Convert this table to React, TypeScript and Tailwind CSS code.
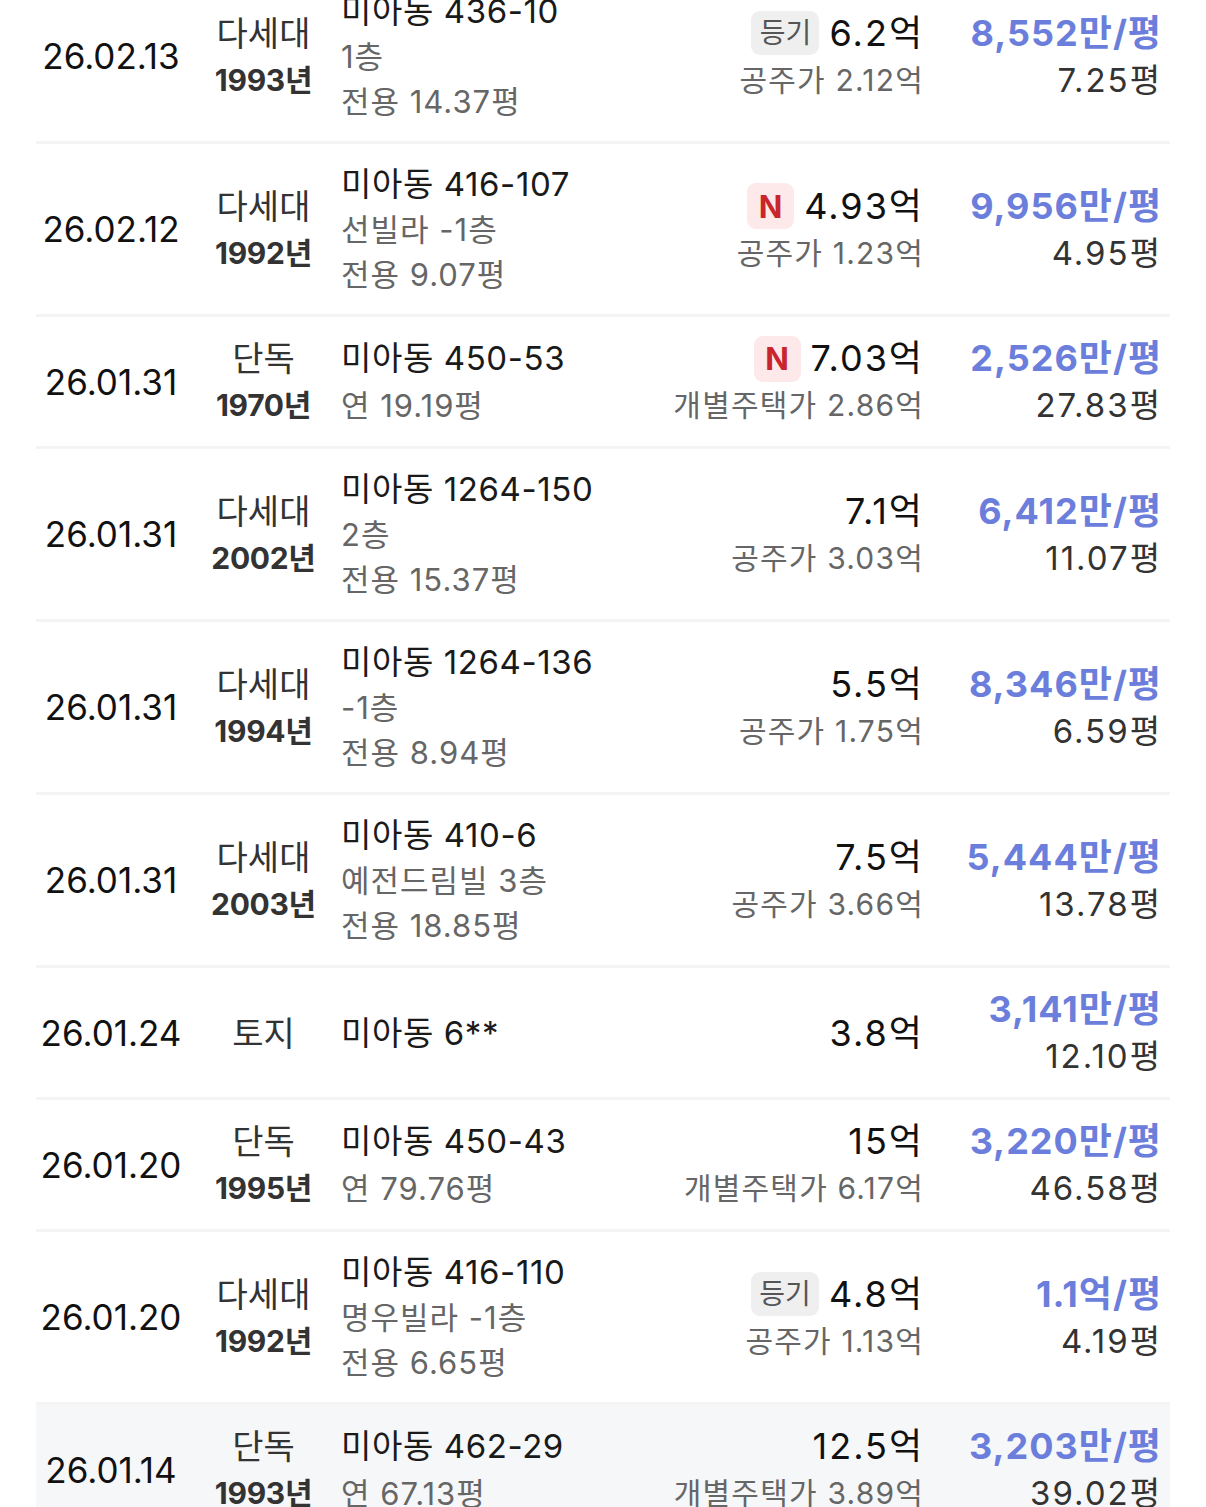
import type { ReactNode } from 'react';

type Deal = {
  date: string;
  type: string;
  year?: string;
  addr: string;
  subs: string[];
  badge?: '등기' | 'N';
  price: string;
  official?: string;
  per: string;
  area: string;
  highlight?: boolean;
};

const DEALS: Deal[] = [
  { date: '26.02.13', type: '다세대', year: '1993년', addr: '미아동 436-10', subs: ['1층', '전용 14.37평'], badge: '등기', price: '6.2억', official: '공주가 2.12억', per: '8,552만/평', area: '7.25평' },
  { date: '26.02.12', type: '다세대', year: '1992년', addr: '미아동 416-107', subs: ['선빌라 -1층', '전용 9.07평'], badge: 'N', price: '4.93억', official: '공주가 1.23억', per: '9,956만/평', area: '4.95평' },
  { date: '26.01.31', type: '단독', year: '1970년', addr: '미아동 450-53', subs: ['연 19.19평'], badge: 'N', price: '7.03억', official: '개별주택가 2.86억', per: '2,526만/평', area: '27.83평' },
  { date: '26.01.31', type: '다세대', year: '2002년', addr: '미아동 1264-150', subs: ['2층', '전용 15.37평'], price: '7.1억', official: '공주가 3.03억', per: '6,412만/평', area: '11.07평' },
  { date: '26.01.31', type: '다세대', year: '1994년', addr: '미아동 1264-136', subs: ['-1층', '전용 8.94평'], price: '5.5억', official: '공주가 1.75억', per: '8,346만/평', area: '6.59평' },
  { date: '26.01.31', type: '다세대', year: '2003년', addr: '미아동 410-6', subs: ['예전드림빌 3층', '전용 18.85평'], price: '7.5억', official: '공주가 3.66억', per: '5,444만/평', area: '13.78평' },
  { date: '26.01.24', type: '토지', addr: '미아동 6**', subs: [], price: '3.8억', per: '3,141만/평', area: '12.10평' },
  { date: '26.01.20', type: '단독', year: '1995년', addr: '미아동 450-43', subs: ['연 79.76평'], price: '15억', official: '개별주택가 6.17억', per: '3,220만/평', area: '46.58평' },
  { date: '26.01.20', type: '다세대', year: '1992년', addr: '미아동 416-110', subs: ['명우빌라 -1층', '전용 6.65평'], badge: '등기', price: '4.8억', official: '공주가 1.13억', per: '1.1억/평', area: '4.19평' },
  { date: '26.01.14', type: '단독', year: '1993년', addr: '미아동 462-29', subs: ['연 67.13평'], price: '12.5억', official: '개별주택가 3.89억', per: '3,203만/평', area: '39.02평', highlight: true },
];

function Badge({ kind }: { kind: '등기' | 'N' }): ReactNode {
  if (kind === 'N') {
    return (
      <span className="flex h-[46px] w-[47px] items-center justify-center rounded-[9px] bg-[#fde8ea] text-[31px] font-bold text-[#c9252d]">
        N
      </span>
    );
  }
  return (
    <span className="flex h-[44px] w-[68px] items-center justify-center rounded-[9px] bg-[#efefef] text-[28px] text-[#555555]">
      등기
    </span>
  );
}

function DealRow({ deal }: { deal: Deal }) {
  const addrLeading = deal.subs.length === 2 ? 'leading-[45px]' : 'leading-[47px]';
  return (
    <li
      className={
        deal.highlight
          ? 'flex items-center bg-[#f6f7f9] pt-[18px] pb-[17px] pr-[8px]'
          : 'flex items-center border-b-[3px] border-[#f4f4f5] pt-[18px] pb-[17px] pr-[8px]'
      }
    >
      <div className="w-[150px] shrink-0 text-center text-[35px] leading-[47px] text-[#111111]">
        {deal.date}
      </div>

      <div className="flex w-[155px] shrink-0 flex-col items-center leading-[47px] text-[#333333]">
        <span className="text-[34px]">{deal.type}</span>
        {deal.year ? (
          <span className="text-[30px] font-bold tracking-[-0.3px]">{deal.year}</span>
        ) : null}
      </div>

      <div className={`flex min-w-0 flex-1 flex-col ${addrLeading}`}>
        <span className="text-[33px] tracking-[0.6px] text-[#1a1a1a]">{deal.addr}</span>
        {deal.subs.map((line) => (
          <span key={line} className="text-[31px] tracking-[1px] text-[#666666]">
            {line}
          </span>
        ))}
      </div>

      <div className="flex shrink-0 flex-col items-end leading-[47px]">
        <div className="flex items-center gap-[10px]">
          {deal.badge ? <Badge kind={deal.badge} /> : null}
          <span className="text-[36px] tracking-[2px] text-[#111111]">{deal.price}</span>
        </div>
        {deal.official ? (
          <span className="text-[30px] tracking-[1.2px] text-[#666666]">{deal.official}</span>
        ) : null}
      </div>

      <div className="flex w-[238px] shrink-0 flex-col items-end leading-[47px]">
        <span className="text-[36px] font-bold tracking-[1px] text-[#6b7edb]">{deal.per}</span>
        <span className="text-[33px] tracking-[2px] text-[#333333]">{deal.area}</span>
      </div>
    </li>
  );
}

export default function App() {
  return (
    <div className="h-[1507px] overflow-hidden bg-white font-['Inter','Noto_Sans_CJK_KR',sans-serif]">
      <ul className="-mt-[29px] px-[36px]">
        {DEALS.map((deal, i) => (
          <DealRow key={i} deal={deal} />
        ))}
      </ul>
    </div>
  );
}
